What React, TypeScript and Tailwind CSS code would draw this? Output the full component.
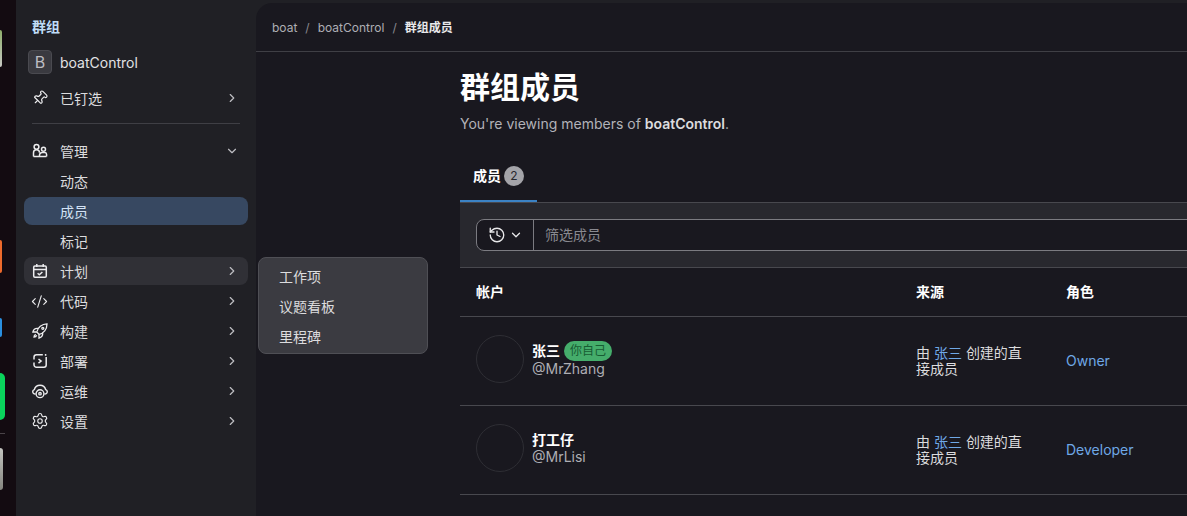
import { ChevronDown, ChevronRight, CodeXml, History, Pin, Settings } from "lucide-react";
import type { ReactNode } from "react";

const font = "font-['Inter','Noto_Sans_CJK_SC',sans-serif]";

const iconProps = {
    width: 16,
    height: 16,
    viewBox: "0 0 16 16",
    fill: "none",
    stroke: "currentColor",
    strokeWidth: 1.5,
};

const UsersIcon = () => (
    <svg {...iconProps}>
        <circle cx="4.500" cy="3.800" r="2.400" />
        <path d="M1.500 13.500V9.800a3 3 0 0 1 6 0" />
        <path d="M1.500 13.500h13" />
        <circle cx="11.500" cy="6.200" r="2" />
        <path d="M7.500 13.500v-1.300a2.600 2.600 0 0 1 2.600-2.600h2.800a2 2 0 0 1 1.700 1.900v2" />
    </svg>
);

const PlanIcon = () => (
    <svg {...iconProps}>
        <rect x="1.700" y="3" width="12.600" height="11.200" rx="1.200" />
        <path d="M1.700 6.500h12.600M4.800 1v3M11.200 1v3" />
        <path d="M5.600 10.200l1.700 1.500 3.100-2.700" />
    </svg>
);

const RocketIcon = () => (
    <svg {...iconProps} strokeWidth={1.3}>
        <path d="M4.800 9C5.600 4.500 9.800 1 15 .9 15 6.300 11.600 10.500 7 11.300z" />
        <path d="M4.800 9H.9C1.500 6.600 3.600 5 6.200 5.400M7 11.300v3.800c2.500-.7 4-2.800 3.600-5.400" />
        <path d="M3.800 11.400c-1.200.4-1.800 1.400-1.800 2.700 1.300 0 2.300-.6 2.700-1.800" />
        <circle cx="10.800" cy="5.300" r="1" />
    </svg>
);

const DeployIcon = () => (
    <svg {...iconProps}>
        <path d="M10.800 1.700H4.500A2.500 2.500 0 0 0 2 4.200v2.300M2 9.500v2.300a2.500 2.500 0 0 0 2.500 2.500H12a2.200 2.200 0 0 0 2.200-2.200V4" />
        <path d="M6.500 6l2.600 2.100-2.600 2.100" />
        <path d="M13.600 1v1.800" />
    </svg>
);

const OpsIcon = () => (
    <svg {...iconProps} strokeWidth={1.4}>
        <path d="M3.600 11H2.900A2.200 2.200 0 0 1 2.300 6.700 5.900 5.900 0 0 1 13.700 6.700a2.200 2.200 0 0 1-.6 4.300h-.7" />
        <circle cx="8" cy="10.700" r="3.900" />
        <circle cx="8" cy="10.700" r="1.200" />
    </svg>
);

function NavItem({
    icon,
    label,
    open,
    active,
    hover,
}: {
    icon?: ReactNode;
    label: string;
    open?: boolean;
    active?: boolean;
    hover?: boolean;
}) {
    return (
        <div
            className={`flex h-[28px] items-center rounded-lg pl-2 pr-[9px] text-[14px] mb-[2px] ${
                active ? "bg-[#374861] text-[#d3e3f5]" : hover ? "bg-[#303036] text-[#dcdcde]" : "text-[#dcdcde]"
            }`}
        >
            <span className="flex w-[28px] shrink-0 items-center text-[#ececee]">{icon}</span>
            <span className="flex-1">{label}</span>
            {open === false && <ChevronRight size={14} strokeWidth={2} className="text-[#bdbdc2]" />}
            {open === true && <ChevronDown size={14} strokeWidth={2} className="text-[#bdbdc2]" />}
        </div>
    );
}

function Sidebar() {
    return (
        <aside className="relative w-[240px] shrink-0 bg-[#202025] px-2 pt-[16px]">
            <div className="px-[8px] text-[14px] font-semibold leading-[22px] text-[#bfdcf7]">群组</div>
            <div className="mt-[12px] flex h-[24px] items-center gap-[8px] pl-[4px] text-[14px] text-[#e2e2e4]">
                <div className="flex h-[24px] w-[24px] items-center justify-center rounded border border-[#4a4a50] bg-[#3a3a40] text-[16px] text-[#bdbdc2]">
                    B
                </div>
                boatControl
            </div>
            <div className="mt-[10px]">
                <NavItem icon={<Pin size={16} strokeWidth={1.8} className="rotate-45" />} label="已钉选" open={false} />
            </div>
            <div className="mx-2 mb-[13px] mt-[11px] h-px bg-[#3f3f45]" />
            <NavItem icon={<UsersIcon />} label="管理" open={true} />
            <NavItem label="动态" />
            <NavItem label="成员" active />
            <NavItem label="标记" />
            <NavItem icon={<PlanIcon />} label="计划" open={false} hover />
            <NavItem icon={<CodeXml size={17} strokeWidth={1.6} className="-ml-px" />} label="代码" open={false} />
            <NavItem icon={<RocketIcon />} label="构建" open={false} />
            <NavItem icon={<DeployIcon />} label="部署" open={false} />
            <NavItem icon={<OpsIcon />} label="运维" open={false} />
            <NavItem icon={<Settings size={18} strokeWidth={1.5} className="-ml-px" />} label="设置" open={false} />

            {/* flyout menu */}
            <div className="absolute left-[242px] top-[257px] z-10 w-[170px] rounded-lg border border-[#4f4f55] bg-[#3b3b41] pb-px pt-[4px] pl-[20px] text-[14px] leading-[30px] text-[#dcdcde]">
                <div>工作项</div>
                <div>议题看板</div>
                <div>里程碑</div>
            </div>
        </aside>
    );
}

function MemberRow({ name, user, self, role }: { name: string; user: string; self?: boolean; role: string }) {
    return (
        <div className="flex h-[89px] items-center border-b border-[#48484e]">
            <div className="flex w-[440px] shrink-0 items-start gap-2 self-stretch pl-4 pt-[18px]">
                <div className="h-[48px] w-[48px] rounded-full border border-[#2e2e34]" />
                <div className="pt-[8px] text-[14px] leading-[16px]">
                    <div className="flex h-[16px] items-center gap-[4px]">
                        <span className="font-semibold text-white">{name}</span>
                        {self && (
                            <span className="flex h-[20px] items-center rounded-full bg-[#45ad6b] px-[6px] text-[12px] text-[#175c33]">
                                你自己
                            </span>
                        )}
                    </div>
                    <div className={`text-[#aeaeb4] ${self ? "mt-[2px]" : "mt-px"}`}>{user}</div>
                </div>
            </div>
            <div className="w-[150px] shrink-0 pl-4 pr-4 text-[14px] leading-[16px] text-[#dcdcde]">
                由 <span className="text-[#6fa8e6]">张三</span> 创建的直接成员
            </div>
            <div className="pb-[2px] pl-4 text-[14px] text-[#6fa8e6]">{role}</div>
        </div>
    );
}

function Main() {
    return (
        <main className="mt-[3px] min-w-0 flex-1 overflow-hidden rounded-tl-2xl bg-[#19181f]">
            <div className="flex h-[49px] items-center gap-[8px] border-b border-[#3f3f45] px-4 pt-[2px] text-[12px]">
                <span className="text-[#aeaeb4]">boat</span>
                <span className="text-[#89898f]">/</span>
                <span className="text-[#aeaeb4]">boatControl</span>
                <span className="text-[#89898f]">/</span>
                <span className="font-semibold text-[#e8e8ea]">群组成员</span>
            </div>
            <div className="ml-[204px] w-[900px]">
                <h1 className="mt-[15px] text-[30px] font-semibold leading-[40px] text-white">群组成员</h1>
                <p className="mt-[7px] text-[14px] leading-[20px] text-[#b2b2b8]">
                    You're viewing members of <span className="font-semibold text-[#dcdcde]">boatControl</span>.
                </p>
                <div className="mt-[16px] flex h-[52px]">
                    <div className="flex w-[77px] items-center gap-[3px] border-b-2 border-[#3b82c4] pl-[13px] pt-px">
                        <span className="text-[14px] font-semibold text-white">成员</span>
                        <span className="flex h-[20px] w-[20px] items-center justify-center rounded-full bg-[#a4a4a9] text-[12px] text-[#28282e]">
                            2
                        </span>
                    </div>
                </div>
                <div className="flex h-[66px] items-center border-y border-[#48484e] bg-[#28282e] px-4">
                    <div className="flex h-[32px] w-full items-stretch rounded-lg border border-[#7b7b81] bg-[#19181f]">
                        <div className="flex w-[57px] items-center justify-center gap-[3px] border-r border-[#7b7b81] text-[#e8e8ea]">
                            <History size={18} strokeWidth={1.8} />
                            <ChevronDown size={14} strokeWidth={2.2} />
                        </div>
                        <div className="flex items-center pb-[2px] pl-[11px] text-[14px] text-[#89898f]">筛选成员</div>
                    </div>
                </div>
                <div className="flex h-[49px] items-center border-b border-[#48484e] pb-[2px] text-[14px] font-semibold text-white">
                    <div className="w-[440px] shrink-0 pl-4">帐户</div>
                    <div className="w-[150px] shrink-0 pl-4">来源</div>
                    <div className="pl-4">角色</div>
                </div>
                <MemberRow name="张三" user="@MrZhang" self role="Owner" />
                <MemberRow name="打工仔" user="@MrLisi" role="Developer" />
            </div>
        </main>
    );
}

export default function App() {
    return (
        <div className={`flex h-[516px] w-[1187px] overflow-hidden bg-[#202025] ${font}`}>
            {/* desktop dock peeking out behind the window */}
            <div className="flex w-[16px] shrink-0 flex-col items-start bg-[#130b11]">
                <div className="mt-[30px] h-[37px] w-[2px] rounded-r bg-linear-to-b from-[#8fae6a] to-[#c8c8c4]" />
                <div className="mt-[173px] h-[33px] w-[2px] rounded-r bg-[#ee6a2c]" />
                <div className="mt-[45px] h-[19px] w-[2px] rounded-r bg-[#2a8fe0]" />
                <div className="mt-[36px] h-[47px] w-[5px] rounded-r-md bg-[#0ad45c]" />
                <div className="mt-[13px] h-px w-[5px] bg-[#4a4348]" />
                <div className="mt-[14px] h-[42px] w-[3px] rounded-r bg-linear-to-b from-[#c4c4c0] to-[#85857f]" />
            </div>
            <Sidebar />
            <Main />
        </div>
    );
}
